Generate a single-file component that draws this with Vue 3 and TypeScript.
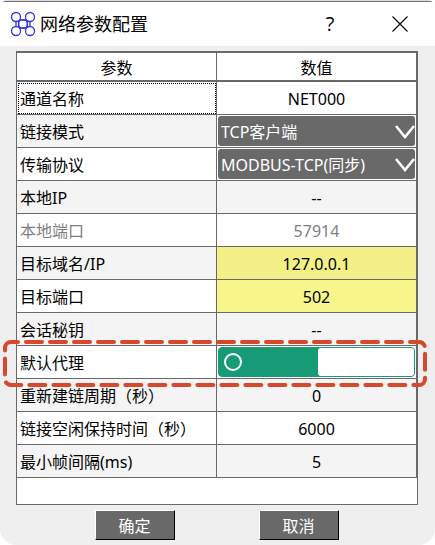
<script setup lang="ts">
import { ref } from 'vue'

type Kind = 'text' | 'select' | 'switch'

interface Row {
  id: string
  label: string
  kind: Kind
  value: string
  options?: string[]
  muted?: boolean
  required?: boolean
}

const rows = ref<Row[]>([
  { id: 'name', label: '通道名称', kind: 'text', value: 'NET000' },
  { id: 'mode', label: '链接模式', kind: 'select', value: 'TCP客户端', options: ['TCP客户端'] },
  { id: 'protocol', label: '传输协议', kind: 'select', value: 'MODBUS-TCP(同步)', options: ['MODBUS-TCP(同步)'] },
  { id: 'local-ip', label: '本地IP', kind: 'text', value: '--' },
  { id: 'local-port', label: '本地端口', kind: 'text', value: '57914', muted: true },
  { id: 'host', label: '目标域名/IP', kind: 'text', value: '127.0.0.1', required: true },
  { id: 'port', label: '目标端口', kind: 'text', value: '502', required: true },
  { id: 'key', label: '会话秘钥', kind: 'text', value: '--' },
  { id: 'proxy', label: '默认代理', kind: 'switch', value: '' },
  { id: 'retry', label: '重新建链周期（秒）', kind: 'text', value: '0' },
  { id: 'idle', label: '链接空闲保持时间（秒）', kind: 'text', value: '6000' },
  { id: 'frame', label: '最小帧间隔(ms)', kind: 'text', value: '5' },
])

const proxyOff = ref(false)
const selected = ref('name')
</script>

<template>
  <main class="dialog">
    <header class="titlebar">
      <svg class="logo" viewBox="0 0 26 26" aria-hidden="true">
        <g fill="none" stroke="#3a35d8" stroke-width="1.3">
          <circle cx="6" cy="6" r="4.5" />
          <circle cx="20" cy="6" r="4.5" />
          <circle cx="6" cy="20" r="4.5" />
          <circle cx="20" cy="20" r="4.5" />
          <circle cx="13" cy="13" r="4.4" />
          <path d="M6 10.500v5M8.500 9.500v7M20 10.500v5M17.500 9.500v7M9.500 9h7M9.500 17h7" />
        </g>
      </svg>
      <h1>网络参数配置</h1>
      <button class="tool" type="button">?</button>
      <button class="tool" type="button">
        <svg class="close" viewBox="0 0 16 16" aria-hidden="true">
          <path d="M.5.5l15 15M15.5.5l-15 15" fill="none" stroke="#000" stroke-width="1.1" />
        </svg>
      </button>
    </header>

    <section class="sheet">
      <table>
        <thead>
          <tr>
            <th>参数</th>
            <th>数值</th>
          </tr>
        </thead>
        <tbody>
          <tr v-for="row in rows" :key="row.id" :class="{ marked: row.kind === 'switch' }">
            <td class="name" :class="{ muted: row.muted, selected: selected === row.id }" @click="selected = row.id">
              <label :for="row.id">{{ row.label }}</label>
              <svg v-if="row.kind === 'switch'" class="marker" aria-hidden="true">
                <rect x="2" y="2" rx="6" />
              </svg>
            </td>
            <td class="value" :class="{ muted: row.muted, required: row.required }">
              <div v-if="row.kind === 'select'" class="frame">
                <select :id="row.id" v-model="row.value">
                  <option v-for="option in row.options" :key="option">{{ option }}</option>
                </select>
                <svg class="chevron" viewBox="0 0 20 14" aria-hidden="true">
                  <path d="M1 1l9 11 9-11" fill="none" stroke="#fff" stroke-width="2.6" />
                </svg>
              </div>
              <div v-else-if="row.kind === 'switch'" class="frame">
                <input :id="row.id" v-model="proxyOff" class="switch" type="checkbox" role="switch" />
              </div>
              <input v-else :id="row.id" v-model="row.value" class="field" type="text" :disabled="row.muted" />
            </td>
          </tr>
        </tbody>
      </table>
    </section>

    <footer class="actions">
      <button type="button">确定</button>
      <button type="button">取消</button>
    </footer>
  </main>
</template>

<style>
body {
  background: #fff;
}
</style>

<style scoped>
.dialog {
  box-sizing: border-box;
  min-height: 100vh;
  display: flex;
  flex-direction: column;
  overflow: hidden;
  background: #efefef;
  border-radius: 8px 8px 16px 16px;
  color: #000;
  font: 16px/24px "Noto Sans", "Noto Sans CJK SC", sans-serif;
}

.titlebar {
  box-sizing: border-box;
  height: 46px;
  display: flex;
  align-items: center;
  padding: 0 12px 0 10px;
  border-top: 1px solid #dcdcdc;
  background: #fff;
  box-shadow: inset 0 1px #707070;
}

.logo {
  width: 26px;
  height: 26px;
}

h1 {
  flex: 1;
  margin: 0 0 0 4px;
  font-size: 18px;
  font-weight: 400;
}

.tool {
  width: 46px;
  height: 40px;
  margin-left: 24px;
  padding: 0;
  display: grid;
  place-items: center;
  border: 0;
  background: none;
  color: #000;
  font: 20px/24px "Open Sans", sans-serif;
}

.close {
  width: 16px;
  height: 16px;
}

.sheet {
  flex: 1;
  margin: 5px 17px 0 16px;
  border: 1px solid #696969;
  background: #fff;
}

table {
  width: 100%;
  table-layout: fixed;
  border-spacing: 0;
}

th {
  box-sizing: border-box;
  height: 30px;
  padding: 2px 0 0;
  border: solid #696969;
  border-width: 1px 1px 2px 0;
  font-weight: 400;
}

td {
  height: 32px;
  padding: 0;
  border: solid #696969;
  border-width: 0 1px 1px 0;
  background: #fff;
}

tr:nth-child(even) td {
  background: #f4f4f4;
}

.name label {
  display: block;
  padding: 2px 0 0 3px;
  white-space: nowrap;
}

.name.selected {
  outline: 1px dotted #000;
  outline-offset: -2px;
}

tr .muted,
.muted .field {
  color: #808080;
}

tr .value.required {
  background: #f8f68b;
}

tr:nth-child(even) .value.required {
  background: #f2f086;
}

.field {
  display: block;
  box-sizing: border-box;
  width: 100%;
  height: 32px;
  padding: 2px 0 0;
  border: 0;
  background: none;
  color: inherit;
  font: inherit;
  text-align: center;
}

.frame {
  position: relative;
  box-sizing: border-box;
  height: 32px;
  padding: 1px;
  background: #fff;
}

select {
  display: block;
  box-sizing: border-box;
  width: 100%;
  height: 30px;
  padding: 2px 24px 0 3px;
  border: 0;
  border-radius: 3px;
  appearance: none;
  background: #696969;
  color: #fff;
  font: inherit;
}

.chevron {
  position: absolute;
  top: 10px;
  right: 1px;
  width: 20px;
  height: 14px;
  pointer-events: none;
}

.switch {
  display: flex;
  align-items: center;
  box-sizing: border-box;
  width: 100%;
  height: 30px;
  margin: 0;
  border: 1px solid #179b76;
  border-radius: 4px;
  appearance: none;
  background: #179b76;
}

.switch::before {
  content: "";
  box-sizing: border-box;
  width: 18px;
  height: 18px;
  margin-left: 5px;
  border: 2px solid #fff;
  border-radius: 50%;
}

.switch::after {
  content: "";
  width: 49%;
  height: 28px;
  margin-left: auto;
  border-radius: 3px;
  background: #fff;
}

.marked {
  position: relative;
}

.marker {
  position: absolute;
  top: -6px;
  left: -14px;
  width: calc(100% + 24px);
  height: 47px;
  overflow: visible;
  pointer-events: none;
}

.marker rect {
  width: calc(100% - 4px);
  height: 43px;
  fill: none;
  stroke: #d8482d;
  stroke-width: 4px;
  stroke-linecap: round;
  stroke-dasharray: 16 8;
  stroke-dashoffset: 9;
}

.actions {
  display: flex;
  justify-content: center;
  gap: 84px;
  padding: 5px 2px 5px 0;
}

.actions button {
  box-sizing: border-box;
  width: 80px;
  height: 30px;
  padding: 2px 0 0;
  border: 1px solid;
  border-color: #fff #000 #000 #fff;
  background: #696969;
  color: #fff;
  font: inherit;
}
</style>
